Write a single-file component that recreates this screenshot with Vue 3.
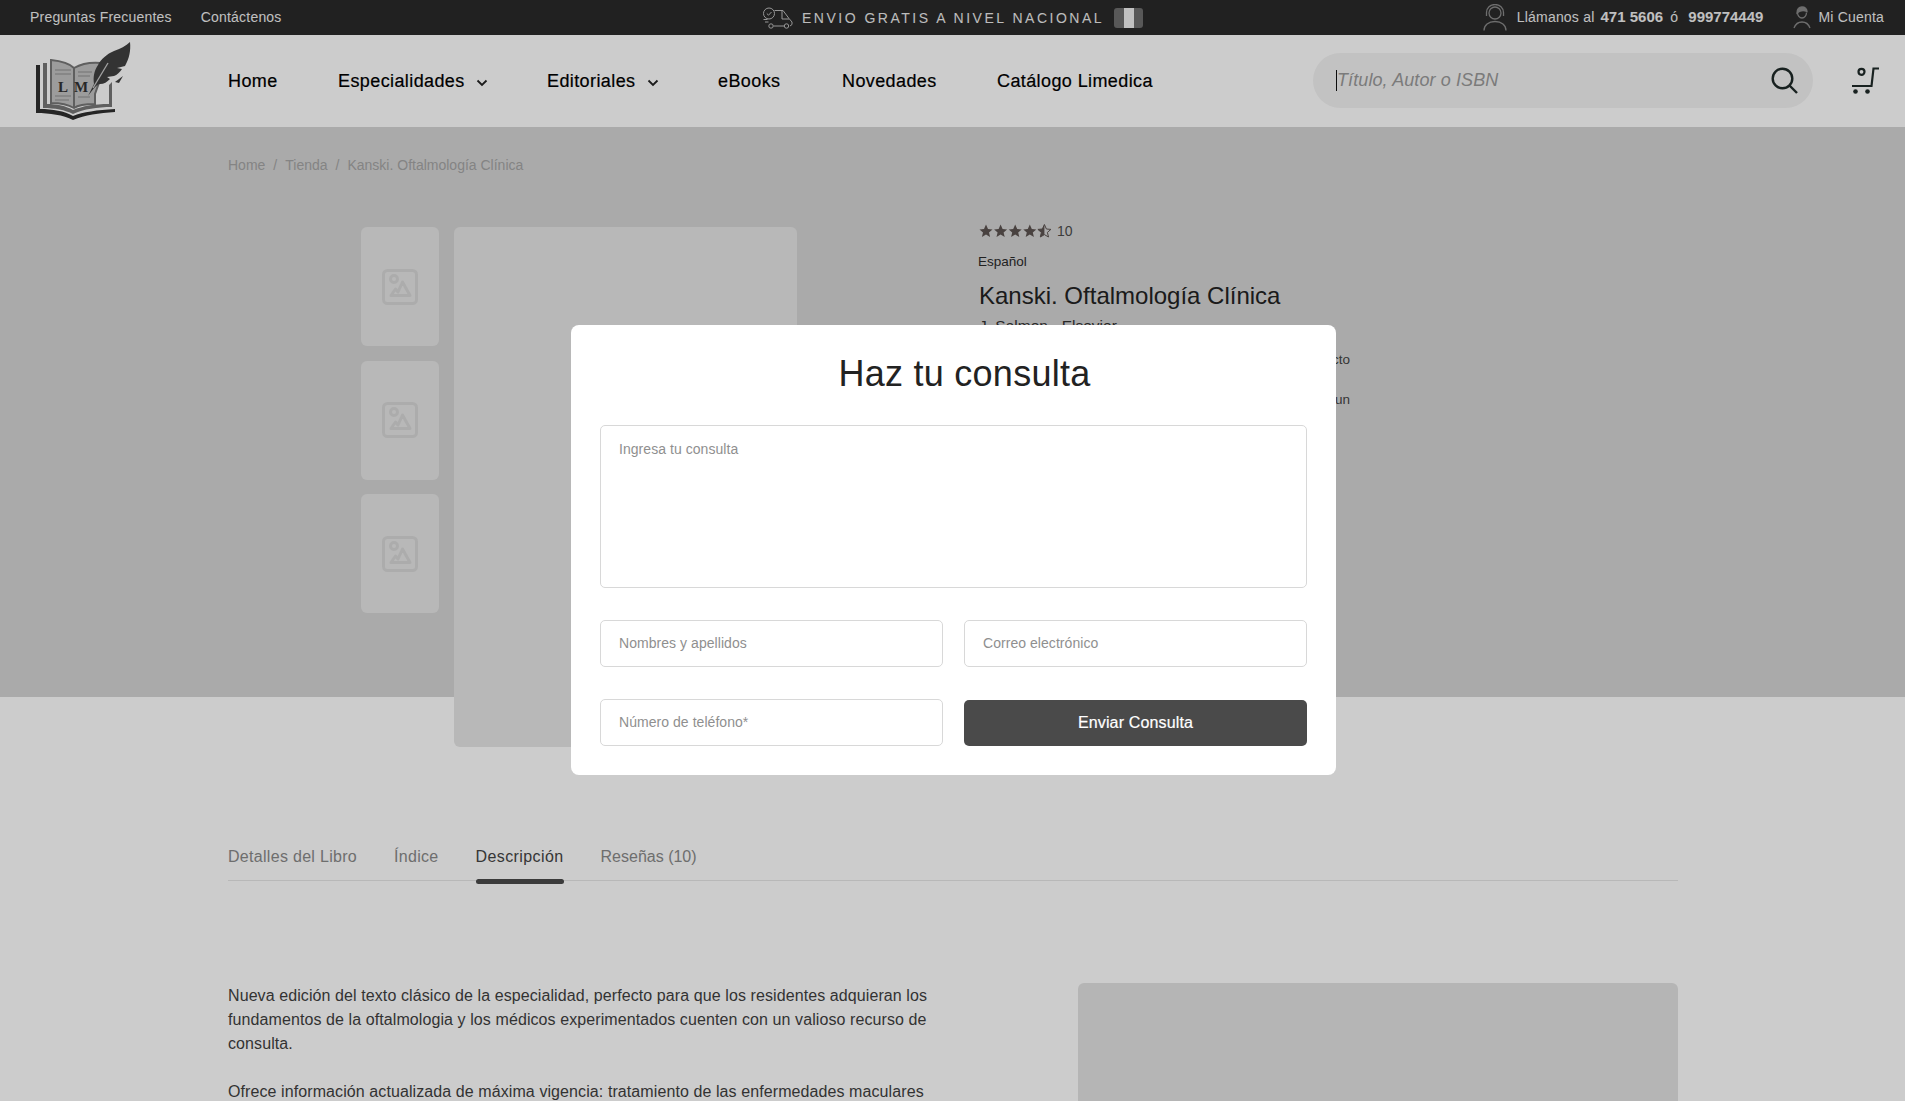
<script setup>
const navItems = [
  { label: 'Home', width: 110 },
  { label: 'Especialidades', width: 209, arrow: true },
  { label: 'Editoriales', width: 171, arrow: true },
  { label: 'eBooks', width: 124 },
  { label: 'Novedades', width: 155 },
  { label: 'Catálogo Limedica' }
]

const tabs = [
  { label: 'Detalles del Libro' },
  { label: 'Índice' },
  { label: 'Descripción', active: true },
  { label: 'Reseñas (10)' }
]
</script>

<template>
  <div class="page">
    <div class="topbar">
      <div class="top-left">
        <a>Preguntas Frecuentes</a>
        <a>Contáctenos</a>
      </div>
      <div class="top-center">
        <svg class="truck" width="32" height="24" viewBox="0 0 32 24" fill="none" stroke="#bdbdbd" stroke-width="1">
          <circle cx="7" cy="7.5" r="5.5" />
          <path d="M4.8 7.5l1.7 1.7 3-3.2" />
          <path d="M12.500 4.500h8.500l6 8 3 3.500v2.500l-2 1.500M11.500 20h10.500M20 5v8h7M1.500 13.500h4M3 16h3.500" />
          <circle cx="9" cy="20" r="2.200" />
          <circle cx="24.500" cy="20" r="2.200" />
        </svg>
        <span class="ship">ENVIO GRATIS A NIVEL NACIONAL</span>
        <span class="flag"><i></i></span>
      </div>
      <div class="top-right">
        <svg class="headset" width="24" height="27" viewBox="0 0 24 27" fill="none" stroke="#8a8a8a" stroke-width="1.300">
          <circle cx="12" cy="9" r="6" />
          <path d="M3.500 12V8.500a8.500 8 0 0 1 17 0V12" />
          <path d="M1 26.500c0-5.500 4.500-9 11-9s11 3.500 11 9" />
        </svg>
        <span class="phone">Llámanos al <b>471 5606</b> <span class="or">ó</span> <b>999774449</b></span>
        <svg class="user" width="18" height="23" viewBox="0 0 18 23" fill="none" stroke="#8a8a8a" stroke-width="1.300">
          <path d="M4.500 6.500c0 3 2 5.500 4.500 5.500s4.500-2.500 4.500-5.500" />
          <path d="M4 7c0-4 2-6 5-6s5 2 5 4.500C11 4 7 4.500 4 7z" fill="#8a8a8a" />
          <path d="M1 22c1.500-4 4.500-6 8-6s6.500 2 8 6" />
        </svg>
        <span class="account">Mi Cuenta</span>
      </div>
    </div>

    <header class="header">
      <svg class="logo" width="95" height="80" viewBox="0 0 95 80">
        <g transform="translate(0 2)">
          <path d="M0 22h4v44c13 0 24 2 33 7 10-4 24-6 42-7v3c-16 1-30 3-42 8C27 72 14 70 0 70z" fill="#2f2f2f" />
          <path d="M7 20h4v41c10 0 19 2 26 6 10-4 21-6 36-6V42l3-3v25c-15 0-28 2-39 7-8-4-18-6-30-6z" fill="#777" />
          <path d="M15 17c10 1 18 3 23 8 7-4 16-6 27-5v14l-6 17v10c-9 0-17 1-21 4-5-3-13-5-23-5z" fill="#c4c4c4" stroke="#777" stroke-width="2" />
          <path d="M19 27h16M19 31h16M19 53h16M19 57h14M42 29h14M42 33h12M42 54h12" stroke="#a0a0a0" stroke-width="1.300" />
          <path d="M38 25v39" stroke="#777" stroke-width="2" />
          <text x="22" y="49" class="logo-text">L</text>
          <text x="38" y="49" class="logo-text">M</text>
        </g>
        <path d="M52 55l6-12c-1-7 0-13 4-19 3-6 9-11 16-14 6-2 12-5 16-9 1 9-1 17-5 24l-8 2 5 1c-2 3-5 6-8 7l-7 1 3 2c-3 3-6 5-10 5-3 0-6 4-12 12z" fill="#404040" />
        <path d="M57 47l15-25" stroke="#ccc" stroke-width="1.300" />
        <path d="M79 41l8-6-4 7z" fill="#404040" />
      </svg>
      <nav class="nav">
        <a v-for="item in navItems" :key="item.label" :style="{ width: item.width ? item.width + 'px' : 'auto' }">
          {{ item.label }}
          <svg v-if="item.arrow" class="chev" width="12" height="8" viewBox="0 0 12 8" fill="none" stroke="#222" stroke-width="1.800">
            <path d="M1.500 1.500L6 6l4.500-4.500" />
          </svg>
        </a>
      </nav>
      <div class="search">
        <i class="caret"></i>
        <input class="search-input" placeholder="Título, Autor o ISBN" />
        <svg width="27" height="27" viewBox="0 0 27 27" fill="none" stroke="#1f2a28" stroke-width="2.400">
          <circle cx="11.500" cy="11.500" r="9.800" />
          <path d="M18.500 18.500l7.500 7.500" />
        </svg>
      </div>
      <svg class="cart" width="29" height="28" viewBox="0 0 29 28" fill="none" stroke="#1f2a28" stroke-width="2.200">
        <circle cx="10.500" cy="4.800" r="3" />
        <path d="M28 1.500h-5.500L20.500 19H1" />
        <circle cx="4.500" cy="24.500" r="2.300" fill="#1f2a28" stroke="none" />
        <circle cx="16.500" cy="24.500" r="2.300" fill="#1f2a28" stroke="none" />
      </svg>
    </header>

    <section class="product">
      <div class="breadcrumb">
        <span>Home</span><span>/</span><span>Tienda</span><span>/</span><span>Kanski. Oftalmología Clínica</span>
      </div>
      <div class="product-body">
        <div class="gallery">
          <div class="thumbs">
            <div v-for="n in 3" :key="n" class="thumb">
              <svg width="36" height="36" viewBox="0 0 36 36" fill="none" stroke="#d8d8d8" stroke-width="3" stroke-linejoin="round">
                <rect x="1.500" y="1.500" width="33" height="33" rx="4" />
                <circle cx="12" cy="10" r="3.500" />
                <path d="M9 26.500l4.500-6.500 2.500 3 4.500-10 7.500 13.500z" />
              </svg>
            </div>
          </div>
          <div class="main-image"></div>
        </div>
        <div class="info">
          <div class="rating">
            <svg class="stars" width="73" height="14" viewBox="0 0 73 14" fill="#5c5350">
              <polygon v-for="n in 4" :key="n" points="7,0.500 9,5 13.500,5.400 10,8.400 11.100,13 7,10.600 2.900,13 4,8.400 0.500,5.400 5,5" :transform="`translate(${(n - 1) * 14.600} 0)`" />
              <g transform="translate(58.400 0)">
                <polygon points="7,0.500 9,5 13.500,5.400 10,8.400 11.100,13 7,10.600 2.900,13 4,8.400 0.500,5.400 5,5" fill="none" stroke="#5c5350" stroke-width="1" />
                <polygon points="7,0.500 7,10.600 2.900,13 4,8.400 0.500,5.400 5,5" />
              </g>
            </svg>
            <span class="count">10</span>
          </div>
          <div class="lang">Español</div>
          <h1>Kanski. Oftalmología Clínica</h1>
          <div class="author">J. Salmon · Elsevier</div>
          <p class="excerpt">Nueva edición del texto clásico de la especialidad, perfecto</p>
          <p class="excerpt">para que los residentes adquieran los fundamentos con un</p>
        </div>
      </div>
    </section>

    <section class="details">
      <div class="tabs">
        <a v-for="tab in tabs" :key="tab.label" class="tab" :class="{ active: tab.active }">{{ tab.label }}</a>
      </div>
      <div class="desc">
        <div class="desc-text">
          <p>Nueva edición del texto clásico de la especialidad, perfecto para que los residentes adquieran los fundamentos de la oftalmologia y los médicos experimentados cuenten con un valioso recurso de consulta.</p>
          <p>Ofrece información actualizada de máxima vigencia: tratamiento de las enfermedades maculares</p>
        </div>
        <div class="desc-image"></div>
      </div>
    </section>

    <div class="overlay">
      <div class="modal">
        <h2>Haz tu consulta</h2>
        <form class="form" @submit.prevent>
          <textarea class="field area" placeholder="Ingresa tu consulta"></textarea>
          <input class="field" placeholder="Nombres y apellidos" />
          <input class="field" placeholder="Correo electrónico" />
          <input class="field" placeholder="Número de teléfono*" />
          <button class="send">Enviar Consulta</button>
        </form>
      </div>
    </div>
  </div>
</template>

<style>
html, body {
  margin: 0;
  height: 100%;
  overflow: hidden;
}
</style>

<style scoped>
.page {
  height: 1101px;
  overflow: hidden;
  background: #fff;
  font-family: "Liberation Sans", Arial, sans-serif;
  color: #222;
}

.topbar {
  height: 35px;
  box-sizing: border-box;
  background: #2a2a2a;
  color: #f0f0f0;
  font-size: 14px;
  display: flex;
  align-items: center;
  justify-content: space-between;
  padding: 0 21px 1px 30px;
  position: relative;
}
.top-left {
  display: flex;
  gap: 29px;
  letter-spacing: 0.2px;
}
.top-center {
  position: absolute;
  left: 762px;
  top: 0;
  height: 35px;
  display: flex;
  align-items: center;
}
.truck {
  margin-right: 8px;
}
.ship {
  letter-spacing: 2.500px;
  font-size: 14px;
  color: #ececec;
}
.flag {
  width: 29px;
  height: 20px;
  margin-left: 10px;
  border-radius: 3px;
  background: #6e6e6e;
  display: flex;
  justify-content: center;
}
.flag i {
  width: 10px;
  background: #f2f2f2;
}
.top-right {
  display: flex;
  align-items: center;
}
.headset {
  margin-right: 10px;
}
.phone {
  margin: 0 30px 2px 0;
  letter-spacing: 0.2px;
}
.phone b {
  font-size: 15px;
  letter-spacing: 0;
  margin-left: 2px;
}
.or {
  margin: 0 4px 0 3px;
}
.user {
  margin-right: 7px;
}
.account {
  letter-spacing: 0.2px;
}

.header {
  height: 92px;
  box-sizing: border-box;
  background: #fff;
  display: flex;
  align-items: center;
  padding: 0 25px 0 36px;
}
.logo {
  flex: none;
  margin-right: 97px;
}
.logo-text {
  font-family: "Liberation Serif", serif;
  font-weight: 700;
  font-size: 15px;
  fill: #333;
}
.nav {
  display: flex;
  align-items: center;
  flex: 1;
  margin-top: 1px;
}
.nav a {
  font-size: 18px;
  color: #000;
  white-space: nowrap;
  letter-spacing: 0.4px;
  -webkit-text-stroke: 0.2px #000;
}
.chev {
  margin-left: 6px;
}
.search {
  position: relative;
  width: 500px;
  height: 55px;
  margin-top: -1px;
  box-sizing: border-box;
  padding: 0 15px 0 24px;
  border-radius: 28px;
  background: #f3f3f3;
  display: flex;
  align-items: center;
}
.caret {
  position: absolute;
  left: 23px;
  top: 17px;
  width: 1px;
  height: 21px;
  background: #111;
}
.search-input {
  flex: 1;
  border: none;
  outline: none;
  background: transparent;
  padding: 0;
  letter-spacing: 0.1px;
  font: italic 18px "Liberation Sans", Arial, sans-serif;
}
.search-input::placeholder {
  color: #9a9a9a;
}
.cart {
  margin-left: 38px;
}

.product {
  height: 570px;
  box-sizing: border-box;
  background: #d5d5d5;
  padding: 30px 0 0 228px;
}
.breadcrumb {
  display: flex;
  gap: 8px;
  font-size: 14px;
  line-height: 16px;
  color: #a5a5a5;
}
.product-body {
  display: flex;
  margin-top: 54px;
  padding-left: 133px;
}
.gallery {
  display: flex;
  gap: 15px;
  width: 618px;
  flex: none;
}
.thumbs {
  display: flex;
  flex-direction: column;
  gap: 14.500px;
}
.thumb {
  width: 78px;
  height: 119px;
  border-radius: 6px;
  background: #e6e6e6;
  display: flex;
  align-items: center;
  justify-content: center;
}
.main-image {
  width: 343px;
  height: 520px;
  border-radius: 6px;
  background: #e6e6e6;
}
.info {
  width: 371px;
  margin-top: -3px;
}
.rating {
  display: flex;
  align-items: center;
  height: 14px;
  gap: 5px;
}
.count {
  font-size: 14px;
  color: #4c4c4c;
}
.lang {
  margin-top: 16px;
  margin-left: -1px;
  font-size: 13.500px;
  line-height: 16px;
  color: #2a2a2a;
}
h1 {
  margin: 11px 0 0;
  font-size: 24px;
  line-height: 30px;
  font-weight: 400;
  color: #222;
}
.author {
  margin-top: 5px;
  font-size: 15.500px;
  line-height: 20px;
  color: #333;
}
.excerpt {
  margin: 0;
  font-size: 13.500px;
  line-height: 40px;
  color: #444;
  text-align: right;
  white-space: nowrap;
}
.author + .excerpt {
  margin-top: 4px;
}

.details {
  padding: 0 227px 0 228px;
}
.tabs {
  margin-top: 138px;
  height: 46px;
  box-sizing: border-box;
  display: flex;
  gap: 37px;
  border-bottom: 1px solid #e6e6e6;
}
.tab {
  position: relative;
  font-size: 16px;
  line-height: 44px;
  letter-spacing: 0.3px;
  color: #8a8a8a;
}
.tab.active {
  color: #444;
  letter-spacing: 0.4px;
}
.tab:last-child {
  letter-spacing: 0;
}
.tab.active::after {
  content: '';
  position: absolute;
  left: 0;
  right: 0;
  bottom: -4px;
  height: 5px;
  border-radius: 3px;
  background: #4a4a4a;
}
.desc {
  display: flex;
  justify-content: space-between;
  margin-top: 103px;
}
.desc-text {
  width: 710px;
  font-size: 16px;
  line-height: 24px;
  letter-spacing: 0.090px;
  color: #3f3f3f;
}
.desc-text p {
  margin: 0 0 24px;
}
.desc-image {
  width: 600px;
  height: 300px;
  margin-top: -1px;
  border-radius: 6px;
  background: #e3e3e3;
}

.overlay {
  position: fixed;
  inset: 0;
  background: rgba(0, 0, 0, 0.2);
  display: flex;
  align-items: center;
  justify-content: center;
}
.modal {
  width: 765px;
  height: 450px;
  margin: 0 0 2px 2px;
  box-sizing: border-box;
  padding: 0 29px;
  border-radius: 8px;
  background: #fff;
}
h2 {
  margin: 0;
  height: 100px;
  padding-left: 22px;
  font-size: 36px;
  line-height: 97px;
  font-weight: 400;
  letter-spacing: 0.250px;
  text-align: center;
  color: #222;
}
.form {
  display: grid;
  grid-template-columns: 343px 343px;
  column-gap: 21px;
  row-gap: 32px;
}
.field {
  box-sizing: border-box;
  width: 100%;
  height: 47px;
  padding: 0 18px;
  border: 1px solid #d8d8d8;
  border-radius: 5px;
  outline: none;
  background: #fff;
  font: 14px "Liberation Sans", Arial, sans-serif;
  letter-spacing: 0.050px;
}
.field::placeholder {
  color: #8f8f8f;
}
.area {
  grid-column: 1 / -1;
  height: 163px;
  padding-top: 15px;
  resize: none;
}
.send {
  height: 46px;
  margin-top: 1px;
  border: none;
  border-radius: 5px;
  background: #4a4a4a;
  color: #fff;
  font: 16px "Liberation Sans", Arial, sans-serif;
  letter-spacing: 0.150px;
  -webkit-text-stroke: 0.2px #fff;
}
</style>
